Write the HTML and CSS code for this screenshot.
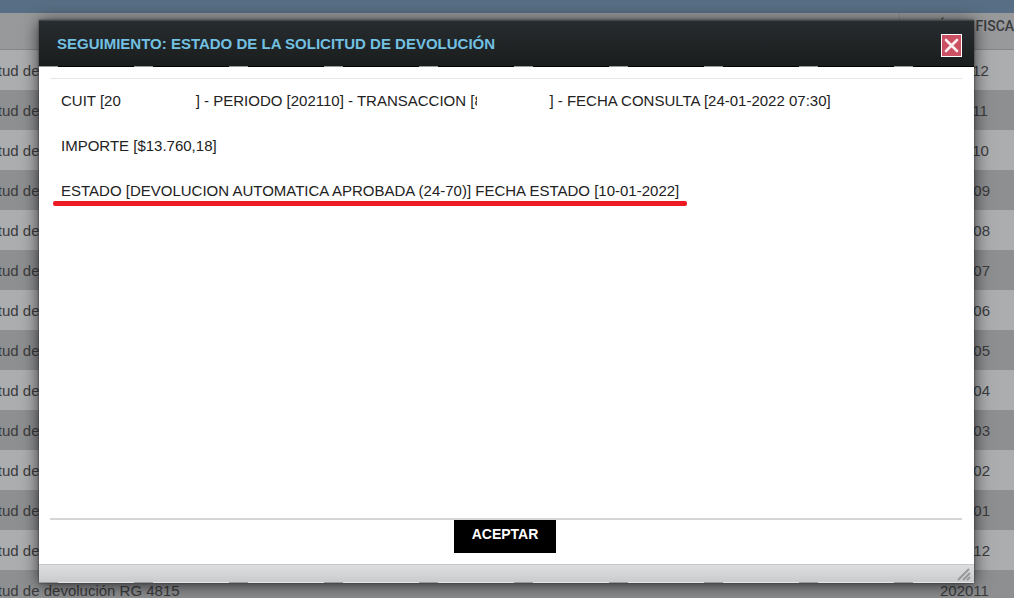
FILE: index.html
```html
<!DOCTYPE html>
<html lang="es">
<head>
  <meta charset="UTF-8">
  <meta name="viewport" content="width=device-width, initial-scale=1.0">
  <title>Seguimiento de devoluciones</title>
  <link rel="stylesheet" href="styles.css">
</head>
<body>
  <div class="topbar"></div>
  <table class="grid">
    <thead>
      <tr><th class="col-desc"></th><th class="col-period">PERÍODO FISCAL</th></tr>
    </thead>
    <tbody>
      <tr><td>Solicitud de devolución RG 4815</td><td class="period">202112</td></tr>
      <tr><td>Solicitud de devolución RG 4815</td><td class="period">202111</td></tr>
      <tr><td>Solicitud de devolución RG 4815</td><td class="period">202110</td></tr>
      <tr><td>Solicitud de devolución RG 4815</td><td class="period">202109</td></tr>
      <tr><td>Solicitud de devolución RG 4815</td><td class="period">202108</td></tr>
      <tr><td>Solicitud de devolución RG 4815</td><td class="period">202107</td></tr>
      <tr><td>Solicitud de devolución RG 4815</td><td class="period">202106</td></tr>
      <tr><td>Solicitud de devolución RG 4815</td><td class="period">202105</td></tr>
      <tr><td>Solicitud de devolución RG 4815</td><td class="period">202104</td></tr>
      <tr><td>Solicitud de devolución RG 4815</td><td class="period">202103</td></tr>
      <tr><td>Solicitud de devolución RG 4815</td><td class="period">202102</td></tr>
      <tr><td>Solicitud de devolución RG 4815</td><td class="period">202101</td></tr>
      <tr><td>Solicitud de devolución RG 4815</td><td class="period">202012</td></tr>
      <tr><td>Solicitud de devolución RG 4815</td><td class="period">202011</td></tr>
    </tbody>
  </table>

  <div class="dialog" role="dialog" aria-labelledby="dialog-title">
    <div class="dialog-header">
      <h2 id="dialog-title">SEGUIMIENTO: ESTADO DE LA SOLICITUD DE DEVOLUCIÓN</h2>
      <button class="close" type="button" aria-label="Cerrar">
        <svg width="15" height="15" viewBox="0 0 15 15" fill="none" stroke="#fbeef0" stroke-width="2.6" stroke-linecap="round">
          <path d="M2 2l11 11M13 2L2 13"/>
        </svg>
      </button>
    </div>
    <div class="dialog-body">
      <div class="message">
        <p>CUIT [20<span class="hidden-cuit"></span>] - PERIODO [202110] - TRANSACCION [<span class="cut-digit">8</span><span class="hidden-id"></span>] - FECHA CONSULTA [24-01-2022 07:30]</p>
        <p>IMPORTE [$13.760,18]</p>
        <p><span class="marked">ESTADO [DEVOLUCION AUTOMATICA APROBADA (24-70)] FECHA ESTADO [10-01-2022]</span></p>
      </div>
      <div class="actions">
        <button class="btn" type="button">ACEPTAR</button>
      </div>
    </div>
    <div class="dialog-footer">
      <svg class="grip" width="16" height="16" viewBox="0 0 16 16" fill="none" stroke="#97989a" stroke-width="2">
        <path d="M1 13L12 2M6 13l7-7M10 13l3-3"/>
      </svg>
    </div>
  </div>
</body>
</html>
```
FILE: styles.css
```css
* {
  box-sizing: border-box;
}

body {
  margin: 0;
  height: 100vh;
  overflow: hidden;
  background: #8c8d8f;
  font-family: "Liberation Sans", Arial, sans-serif;
  font-size: 15px;
  color: #3a3b3d;
}

.topbar {
  height: 13px;
  background: #576e84;
}

/* the list is scrolled sideways behind the dialog */
.grid {
  width: calc(100% + 146px);
  margin-left: -46px;
  table-layout: fixed;
  border-collapse: separate;
  border-spacing: 0;
}

.grid th {
  height: 37px;
  padding: 5px 0 0 14px;
  background: #98999b;
  border-bottom: 1px solid #858688;
  font-family: Roboto, sans-serif;
  font-size: 14px;
  line-height: 16px;
  font-weight: 500;
  text-align: left;
  vertical-align: top;
  white-space: nowrap;
}

.grid .col-period {
  width: 215px;
  border-left: 1px solid #88898b;
}

.grid td {
  height: 40px;
  padding: 0 8px;
  background: #acadaf;
}

.grid tr:nth-child(even) td {
  background: #8e8f91;
}

.grid .period {
  padding-left: 41px;
}

.dialog {
  position: absolute;
  inset: 20px 40px 15px 39px;
  display: flex;
  flex-direction: column;
  background: #fff;
  box-shadow: 0 0 2px #333, 0 2px 16px rgba(0, 0, 0, 0.7);
}

.dialog-header {
  display: flex;
  justify-content: space-between;
  align-items: center;
  height: 47px;
  padding: 2px 12px 0 18px;
  border-top: 1px solid #42494c;
  background:
    repeating-linear-gradient(90deg, #999a9b 0 19px, #000 19px 95px) bottom / 100% 1px no-repeat,
    linear-gradient(#272c2f, #1a1d1d);
}

.dialog-header h2 {
  margin: 0;
  padding-bottom: 2px;
  font-size: 15px;
  line-height: 18px;
  color: #72c0e2;
}

.close {
  display: flex;
  align-items: center;
  justify-content: center;
  width: 21px;
  height: 23px;
  padding: 0;
  border: 1px solid #fff;
  background: #cb5062;
}

.dialog-body {
  flex: 1;
  display: flex;
  flex-direction: column;
  padding: 11px 12px 0 11px;
}

.message {
  flex: 1;
  padding: 13px 11px 0;
  border-top: 1px solid #e6e6e6;
  color: #222;
}

.message p {
  margin: 0 0 27px;
  line-height: 18px;
  white-space: nowrap;
}

.hidden-cuit {
  display: inline-block;
  width: 75px;
}

.cut-digit {
  display: inline-block;
  width: 3px;
  overflow: hidden;
  vertical-align: bottom;
}

.hidden-id {
  display: inline-block;
  width: 72px;
}

.marked {
  position: relative;
}

.marked::after {
  content: "";
  position: absolute;
  left: -8px;
  right: -8px;
  bottom: -7px;
  height: 5px;
  border-radius: 2px;
  background: #ed1c24;
}

.actions {
  height: 46px;
  padding-right: 2px;
  border-top: 2px solid #d6d6d6;
  text-align: center;
}

.btn {
  width: 102px;
  height: 33px;
  padding: 0 0 5px;
  border: 0;
  background: #000;
  color: #fff;
  font-family: inherit;
  font-size: 14px;
  font-weight: bold;
}

.dialog-footer {
  display: flex;
  justify-content: flex-end;
  height: 19px;
  border-top: 1px solid #c6c7c8;
  background:
    repeating-linear-gradient(90deg, #999a9b 0 19px, #e4e5e6 19px 95px) bottom / 100% 1px no-repeat,
    linear-gradient(#dcdee0, #c8cacb);
}

.grip {
  margin: 2px 1px 0 0;
}
```
